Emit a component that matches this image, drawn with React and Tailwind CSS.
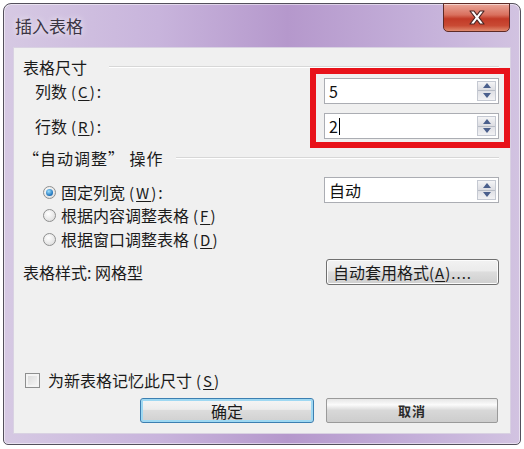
import React from "react";

const FONT = { fontFamily: '"Noto Sans CJK SC", "Noto Sans", sans-serif' };

function Spin({ value, caret }) {
  return (
    <div className="w-[175px] h-[26px] bg-white border border-[#abadb3] flex items-stretch">
      <div className="flex-1 flex items-center pl-[4px] text-[16px] text-[#111] leading-none">
        <span>{value}</span>
        {caret && <span className="ml-[1px] w-[1px] h-[17px] bg-black" />}
      </div>
      <div className="w-[19px] my-[2px] mr-[2px] flex flex-col border border-[#c5c9d2]">
        <div className="flex-1 flex items-center justify-center bg-[linear-gradient(#f4f4f6,#dcdde2)] border-b border-[#b7bcc6]">
          <svg width="8" height="5" viewBox="0 0 8 5"><path d="M0 5 L4 0 L8 5 Z" fill="#4a5f8c" /></svg>
        </div>
        <div className="flex-1 flex items-center justify-center bg-[linear-gradient(#dfe0e5,#f2f2f4)]">
          <svg width="8" height="5" viewBox="0 0 8 5"><path d="M0 0 L8 0 L4 5 Z" fill="#4a5f8c" /></svg>
        </div>
      </div>
    </div>
  );
}

function Radio({ checked }) {
  return (
    <div className="w-[13px] h-[13px] rounded-full border border-[#8e8f8f] bg-[radial-gradient(circle_at_40%_35%,#ffffff,#d6d6d6)] flex items-center justify-center">
      {checked && (
        <div className="w-[7px] h-[7px] rounded-full bg-[radial-gradient(circle_at_40%_35%,#9ee0ff,#1a6fb8_70%,#0c4f8d)]" />
      )}
    </div>
  );
}

function Groove({ className }) {
  return <div className={"h-[2px] border-t border-[#d7d7d7] border-b border-b-white " + className} />;
}

function Mn({ k }) {
  return (
    <span className="ml-[4px] text-[15px] tracking-[2px]">
      (<span className="underline underline-offset-2">{k}</span>)
    </span>
  );
}

export default function App() {
  return (
    <div className="relative w-[524px] h-[449px] bg-white pt-[3px] pl-[3px]" style={FONT}>
      <div className="relative w-[518px] h-[442px] rounded-t-[8px] rounded-b-[5px] border border-[#54505c] bg-[linear-gradient(90deg,#d6c9e3_0%,#c8b4dc_30%,#b598cc_55%,#c4afd9_80%,#d2c3e1_100%)] flex flex-col px-[9px] pb-[10px] shadow-[inset_0_0_0_1px_rgba(255,255,255,0.5)]">
        {/* title bar */}
        <div className="h-[43px] flex items-center pl-[2px]">
          <span className="text-[17px] text-[#3a3442] [text-shadow:0_0_6px_rgba(255,255,255,0.9)]">插入表格</span>
        </div>
        <div className="absolute top-[-1px] right-[10px] w-[67px] h-[29px] rounded-b-[5px] border border-[#5e2a26] bg-[linear-gradient(#eaa699_0%,#d9705e_40%,#c23a27_55%,#c94a34_80%,#e08a6e_100%)] flex items-center justify-center shadow-[inset_0_1px_0_rgba(255,255,255,0.5)]">
          <svg width="18" height="15" viewBox="0 0 18 15">
            <path d="M2 1 L6 1 L9 5 L12 1 L16 1 L11 7.5 L16 14 L12 14 L9 10 L6 14 L2 14 L7 7.5 Z" fill="#ffffff" stroke="#4a2422" strokeWidth="1.2" strokeLinejoin="round" />
          </svg>
        </div>

        {/* client */}
        <div className="flex-1 border border-[#d9d2e2] bg-[#f0f0f0] flex flex-col pt-[9px] pl-[9px] pr-[11px] text-[16px] text-[#1b1b1b] leading-none">
          <div className="h-[20px] flex items-center">
            <span>表格尺寸</span>
            <Groove className="flex-1 ml-[22px]" />
          </div>
          <div className="mt-[1px] h-[25px] flex items-center justify-between">
            <span className="pl-[12px]">列数<Mn k="C" />:</span>
            <Spin value="5" />
          </div>
          <div className="mt-[10px] h-[26px] flex items-center justify-between">
            <span className="pl-[12px]">行数<Mn k="R" />:</span>
            <Spin value="2" caret />
          </div>
          <div className="mt-[9px] h-[20px] flex items-center">
            <span className="tracking-[1px]">“自动调整” 操作</span>
            <Groove className="flex-1 ml-[12px]" />
          </div>
          <div className="mt-[9px] h-[26px] flex items-center justify-between">
            <div className="flex items-center pl-[20px] pt-[4px]">
              <Radio checked />
              <span className="ml-[5px]">固定列宽<Mn k="W" />:</span>
            </div>
            <Spin value="自动" />
          </div>
          <div className="mt-[2px] h-[20px] flex items-center pl-[20px]">
            <Radio />
            <span className="ml-[5px]">根据内容调整表格<Mn k="F" /></span>
          </div>
          <div className="mt-[4px] h-[20px] flex items-center pl-[20px]">
            <Radio />
            <span className="ml-[5px]">根据窗口调整表格<Mn k="D" /></span>
          </div>
          <div className="mt-[10px] h-[26px] flex items-center justify-between">
            <span>表格样式: 网格型</span>
            <div className="w-[173px] h-[26px] rounded-[3px] border border-[#707070] bg-[linear-gradient(#f2f2f2_0%,#ebebeb_45%,#dddddd_50%,#cfcfcf_100%)] flex items-center pl-[6px] shadow-[inset_0_0_0_1px_#fcfcfc]">
              自动套用格式<span className="text-[15px] tracking-[1px]">(<span className="underline underline-offset-2">A</span>)....</span>
            </div>
          </div>
          <div className="mt-[85px] h-[20px] flex items-center pl-[2px]">
            <div className="w-[15px] h-[15px] border border-[#8e8f8f] bg-[linear-gradient(135deg,#d8d8d8,#f8f8f8)] shadow-[inset_0_0_0_2px_#f4f4f4]" />
            <span className="ml-[8px]">为新表格记忆此尺寸<Mn k="S" /></span>
          </div>
          <div className="mt-[8px] h-[25px] flex items-center justify-end gap-[12px] pr-[1px]">
            <div className="w-[174px] h-[25px] rounded-[3px] border border-[#3c7fb1] bg-[linear-gradient(#f6f6f6_0%,#ececec_45%,#dcdcdc_50%,#d0d0d0_100%)] shadow-[inset_0_0_0_2px_#9ed8f2] flex items-center justify-center">
              确定
            </div>
            <div className="w-[172px] h-[25px] rounded-[2px] border border-[#9a9a9a] bg-[linear-gradient(#e6e6e6_0%,#fbfbfb_25%,#d8d8d8_50%,#cdcdcd_100%)] flex items-center justify-center">
              <span className="text-[13px] font-bold text-[#2a2a2a] tracking-[1px]">取消</span>
            </div>
          </div>
        </div>
      </div>

      {/* red annotation box */}
      <div className="absolute left-[310px] top-[68px] w-[200px] h-[80px] border-[6px] border-[#e8121a]" />
    </div>
  );
}
